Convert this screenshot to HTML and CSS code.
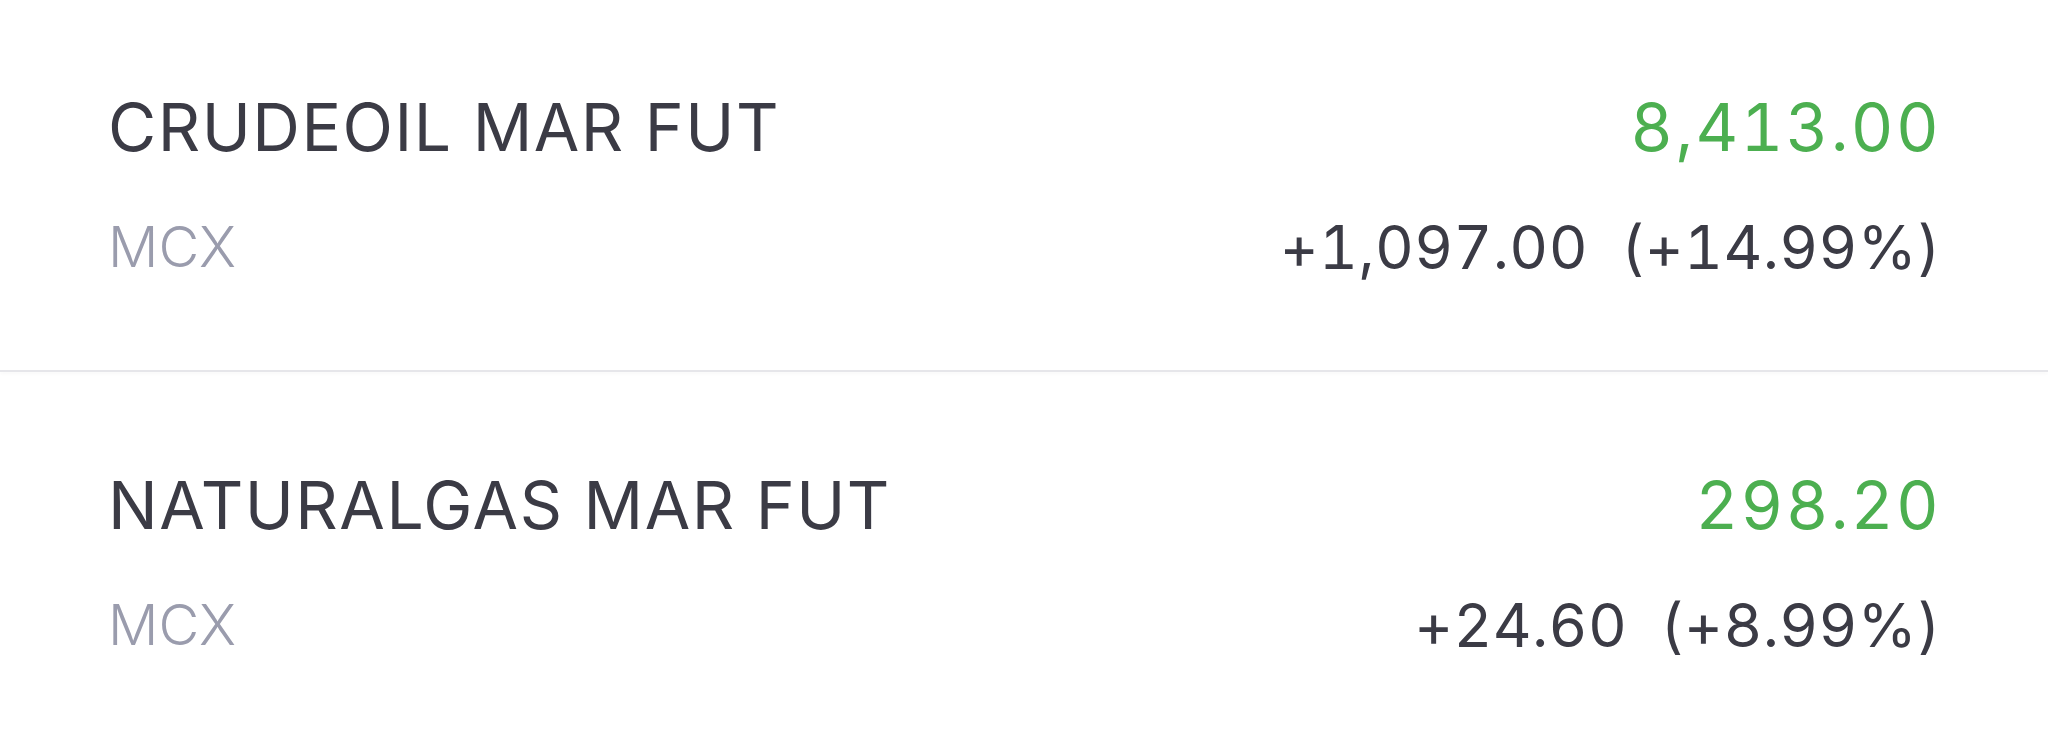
FILE: index.html
```html
<!DOCTYPE html>
<html>
<head>
<meta charset="utf-8">
<link rel="stylesheet" href="styles.css">
</head>
<body>
<div class="list">
  <div class="row">
    <div class="col left">
      <div class="name">CRUDEOIL MAR FUT</div>
      <div class="exch">MCX</div>
    </div>
    <div class="col right">
      <div class="price">8,413.00</div>
      <div class="change">+1,097.00 &nbsp;(+14.99%)</div>
    </div>
  </div>
  <div class="divider"></div>
  <div class="row">
    <div class="col left">
      <div class="name">NATURALGAS MAR FUT</div>
      <div class="exch">MCX</div>
    </div>
    <div class="col right">
      <div class="price">298.20</div>
      <div class="change">+24.60 &nbsp;(+8.99%)</div>
    </div>
  </div>
</div>
</body>
</html>
```
FILE: styles.css
```css
html, body {
  margin: 0;
  padding: 0;
  background: #ffffff;
}
body {
  width: 2048px;
  height: 737px;
  overflow: hidden;
  font-family: Inter, "Liberation Sans", sans-serif;
}
.list {
  margin-top: -6px;
}
.row {
  display: flex;
  justify-content: space-between;
  padding: 93px 107px 87px 108px;
}
.col {
  display: flex;
  flex-direction: column;
  gap: 44px;
}
.right {
  align-items: flex-end;
}
.name, .price {
  font-size: 66px;
  line-height: 80px;
  font-weight: 400;
  white-space: nowrap;
}
.name {
  color: #3b3b45;
  letter-spacing: 1.5px;
}
.price {
  color: #4caf50;
  letter-spacing: 2.3px;
  font-variant-numeric: tabular-nums;
}
.exch, .change {
  line-height: 72px;
  font-weight: 400;
  white-space: nowrap;
}
.exch {
  font-size: 56px;
  color: #9a9cad;
  font-weight: 300;
}
.change {
  font-size: 60px;
  color: #3b3b45;
  letter-spacing: 0.4px;
  font-variant-numeric: tabular-nums;
}
.divider {
  height: 2px;
  background: #e6e6ea;
  box-shadow: 0 2px 3px rgba(0,0,0,0.03);
}
```
